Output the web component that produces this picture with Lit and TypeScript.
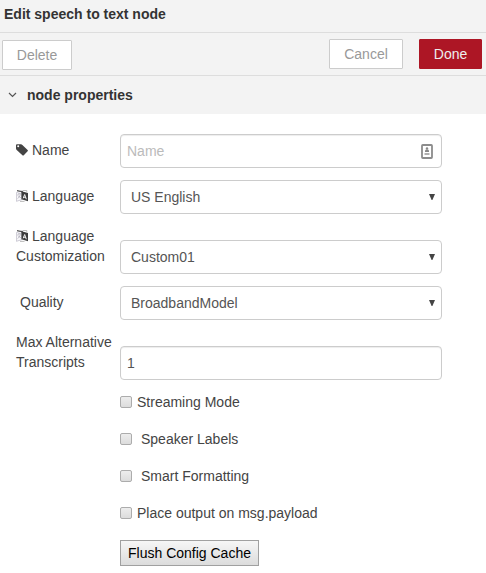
import { LitElement, html, css } from "lit";
import { customElement } from "lit/decorators.js";

const tagIcon = html`<svg class="icon" width="12" height="12" viewBox="0 0 12 12">
  <path fill="#444" fill-rule="evenodd" d="M0 1.2Q0 .2 1 .2H4.9Q5.7 .2 6.4 .9L11.6 6Q12.2 6.7 11.6 7.3L7.8 11.2Q7.1 11.8 6.4 11.2L.7 6Q0 5.4 0 4.6ZM2.2 1.3A1 1 0 1 0 2.2 3.3A1 1 0 1 0 2.2 1.3Z"/>
</svg>`;

const languageIcon = html`<svg class="icon" width="12" height="12" viewBox="0 0 12 12">
  <path fill="#f8f8fa" stroke="#b9b6c4" stroke-width=".7" d="M.4 2.6L6 .9V9.6L.4 11.3Z"/>
  <path fill="none" stroke="#aaa7b5" stroke-width=".7" d="M1.5 4.4L4.8 3.4M3 3V4.4M4.5 4.2Q3.7 7.4 1.5 8.6M1.8 5.3Q3 7.4 4.9 7.7"/>
  <path fill="#555" d="M1 0L7 1.2V2.4L1 1.2Z"/>
  <path fill="#3c3c3c" d="M5.4 1.2L12 3.1V11.2L5.4 9.3Z"/>
  <path fill="none" stroke="#fff" stroke-width=".9" d="M7.2 8.3L8.7 4.5L10.3 9.2M7.7 7L9.7 7.6"/>
  <path fill="none" stroke="#aaa" stroke-width=".8" d="M6.5 .5H10.8V2.2M4 11.4H8.5"/>
</svg>`;

const contactIcon = html`<svg class="contact" width="12" height="15" viewBox="0 0 12 15">
  <rect x="1" y="1" width="10" height="13" rx=".8" fill="#fff" stroke="#8c8c8c" stroke-width="1.8"/>
  <circle cx="6" cy="4.5" r="1.2" fill="#888"/>
  <path d="M4 8V6.8Q4 5.6 6 5.6T8 6.8V8Z" fill="#888"/>
  <path d="M3.5 10H8.5" stroke="#b0b0b0" stroke-width="2"/>
</svg>`;

const arrow = html`<svg class="arrow" width="6" height="6" viewBox="0 0 6 6">
  <path d="M0 0H6L3.4 6H2.6Z" fill="#444"/>
</svg>`;

@customElement("app-root")
export class AppRoot extends LitElement {
  static styles = css`
    :host {
      display: block;
      height: 573px;
      overflow: hidden;
      background: #fff;
      color: #444;
      font: 14px/20px "Liberation Sans", Arial, sans-serif;
    }
    * { box-sizing: border-box; }
    svg { display: block; flex: none; }
    .title {
      height: 33px;
      padding: 4px 4px 0;
      border-bottom: 1px solid #ddd;
      background: #f3f3f3;
      color: #333;
      font-weight: bold;
    }
    .toolbar {
      display: flex;
      align-items: flex-start;
      height: 43px;
      padding: 6px 4px 0 2px;
      border-bottom: 1px solid #ddd;
      background: #f3f3f3;
    }
    .btn {
      height: 30px;
      padding: 0;
      border: 1px solid #ccc;
      border-radius: 1px;
      background: #fff;
      color: #999;
      font: inherit;
      line-height: 28px;
      text-align: center;
    }
    .delete { width: 70px; margin: 1px auto 0 0; }
    .cancel { width: 74px; margin-right: 16px; }
    .done { width: 63px; border-color: #ad1625; background: #ad1625; color: #eee; }
    .section {
      display: flex;
      align-items: center;
      gap: 10px;
      height: 38px;
      padding-left: 8px;
      background: #f3f3f3;
      color: #333;
      font-weight: bold;
    }
    .form {
      display: flex;
      flex-direction: column;
      gap: 12px;
      padding: 20px 44px 0 16px;
    }
    .row { display: flex; align-items: flex-end; }
    .label { width: 104px; padding-bottom: 8px; white-space: nowrap; }
    .line { display: flex; align-items: center; gap: 4px; }
    .indent { padding-left: 4px; }
    .field {
      display: flex;
      align-items: center;
      flex: 1;
      height: 34px;
      padding: 0 8px 0 6px;
      border: 1px solid #ccc;
      border-radius: 4px;
      background: #fff;
      color: #555;
    }
    .select { padding: 0 6px 0 10px; }
    .input { box-shadow: inset 0 1px 1px rgba(0, 0, 0, 0.075); }
    .value { flex: 1; }
    .placeholder { color: #bbb; }
    .checks {
      display: flex;
      flex-direction: column;
      align-items: flex-start;
      gap: 17px;
      padding: 12px 0 0 120px;
    }
    .check { display: flex; align-items: center; gap: 5px; height: 20px; }
    .wide { gap: 9px; }
    .box {
      width: 12px;
      height: 12px;
      border: 1px solid #acacac;
      border-radius: 2px;
      background: linear-gradient(#ededed, #dcdcdc);
    }
    .flush {
      width: 139px;
      height: 26px;
      padding: 0;
      border: 1px solid #a0a0a0;
      border-radius: 0;
      background: linear-gradient(#f6f6f6, #dcdcdc);
      color: #000;
      font: inherit;
      line-height: 24px;
    }
  `;

  private row(label: unknown, control: unknown) {
    return html`<div class="row"><div class="label">${label}</div>${control}</div>`;
  }

  private select(value: string) {
    return html`<div class="field select"><span class="value">${value}</span>${arrow}</div>`;
  }

  private check(text: string, wide = false) {
    return html`<label class="check ${wide ? "wide" : ""}"><span class="box"></span><span>${text}</span></label>`;
  }

  render() {
    return html`
      <div class="title">Edit speech to text node</div>
      <div class="toolbar">
        <button class="btn delete">Delete</button>
        <button class="btn cancel">Cancel</button>
        <button class="btn done">Done</button>
      </div>
      <div class="section">
        <svg width="9" height="6" viewBox="0 0 9 6">
          <path d="M1 1L4.5 4.5L8 1" fill="none" stroke="#555" stroke-width="1.2"/>
        </svg>
        <span>node properties</span>
      </div>
      <div class="form">
        ${this.row(
          html`<div class="line">${tagIcon}<span>Name</span></div>`,
          html`<div class="field input"><span class="value placeholder">Name</span>${contactIcon}</div>`
        )}
        ${this.row(html`<div class="line">${languageIcon}<span>Language</span></div>`, this.select("US English"))}
        ${this.row(
          html`<div class="line">${languageIcon}<span>Language</span></div><div>Customization</div>`,
          this.select("Custom01")
        )}
        ${this.row(html`<div class="indent">Quality</div>`, this.select("BroadbandModel"))}
        ${this.row(
          html`<div>Max Alternative</div><div>Transcripts</div>`,
          html`<div class="field input"><span class="value">1</span></div>`
        )}
      </div>
      <div class="checks">
        ${this.check("Streaming Mode")}
        ${this.check("Speaker Labels", true)}
        ${this.check("Smart Formatting", true)}
        ${this.check("Place output on msg.payload")}
        <button class="flush">Flush Config Cache</button>
      </div>
    `;
  }
}
